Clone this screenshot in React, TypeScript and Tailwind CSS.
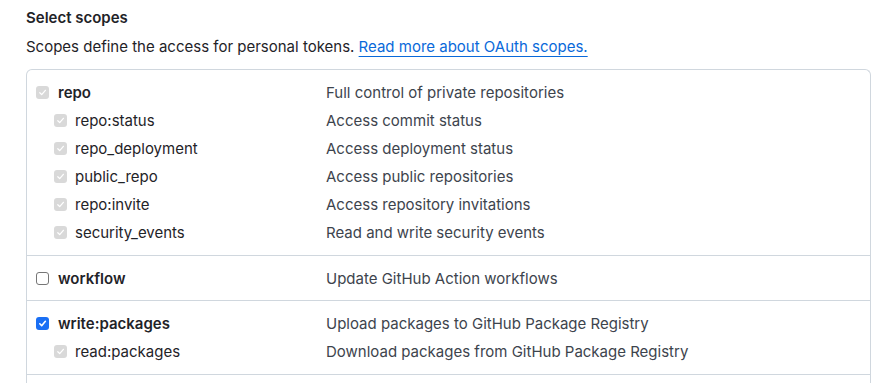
import React from "react";

type Scope = {
  name: string;
  desc: string;
  state: "disabled" | "checked" | "unchecked";
  sub?: boolean;
};

const groups: Scope[][] = [
  [
    { name: "repo", desc: "Full control of private repositories", state: "disabled" },
    { name: "repo:status", desc: "Access commit status", state: "disabled", sub: true },
    { name: "repo_deployment", desc: "Access deployment status", state: "disabled", sub: true },
    { name: "public_repo", desc: "Access public repositories", state: "disabled", sub: true },
    { name: "repo:invite", desc: "Access repository invitations", state: "disabled", sub: true },
    { name: "security_events", desc: "Read and write security events", state: "disabled", sub: true },
  ],
  [{ name: "workflow", desc: "Update GitHub Action workflows", state: "unchecked" }],
  [
    { name: "write:packages", desc: "Upload packages to GitHub Package Registry", state: "checked" },
    { name: "read:packages", desc: "Download packages from GitHub Package Registry", state: "disabled", sub: true },
  ],
];

const Check = ({ state }: { state: Scope["state"] }) => {
  if (state === "unchecked") {
    return <span className="w-[13px] h-[13px] rounded-[3px] border border-[#767676] bg-white shrink-0" />;
  }
  const bg = state === "checked" ? "bg-[#1a6ff4]" : "bg-[#d9d9d9]";
  return (
    <span className={`w-[13px] h-[13px] rounded-[3px] ${bg} shrink-0 flex items-center justify-center`}>
      <svg width="9" height="9" viewBox="0 0 10 10" fill="none">
        <path
          d="M2 5.3 L4.1 7.4 L8.2 2.6"
          stroke="white"
          strokeWidth={state === "checked" ? 1.8 : 1.4}
          strokeLinecap="round"
          strokeLinejoin="round"
        />
      </svg>
    </span>
  );
};

const Row = ({ s }: { s: Scope }) => (
  <div className="flex items-center h-7">
    <div className={`w-[290px] flex items-center ${s.sub ? "pl-[18px] gap-2" : "gap-[9px]"}`}>
      <Check state={s.state} />
      <span className={s.sub ? "text-[#1f2328]" : "font-semibold text-[#1f2328]"}>{s.name}</span>
    </div>
    <div className="text-[#3d444d]">{s.desc}</div>
  </div>
);

export default function App() {
  return (
    <div
      className="bg-white px-[26px] pt-[7px] text-[15px] leading-[21px] text-[#1f2328] w-[893px]"
      style={{ fontFamily: "Inter, 'Liberation Sans', sans-serif" }}
    >
      <h3 className="font-semibold text-[15px]">Select scopes</h3>
      <p className="mt-2">
        Scopes define the access for personal tokens.{" "}
        <a className="text-[#0969da] underline underline-offset-[4px]" href="#">
          Read more about OAuth scopes.
        </a>
      </p>
      <div className="mt-[12px] w-[845px] border border-b-0 border-[#d0d7de] rounded-t-md">
        {groups.map((g, i) => (
          <div
            key={i}
            className={`pl-[9px] pt-2 ${g.length > 1 ? "pb-[9px]" : "pb-2"} ${i > 0 ? "border-t border-[#d0d7de]" : ""}`}
          >
            {g.map((s) => (
              <Row key={s.name} s={s} />
            ))}
          </div>
        ))}
        <div className="h-[12px] border-t border-[#d0d7de]" />
      </div>
    </div>
  );
}
